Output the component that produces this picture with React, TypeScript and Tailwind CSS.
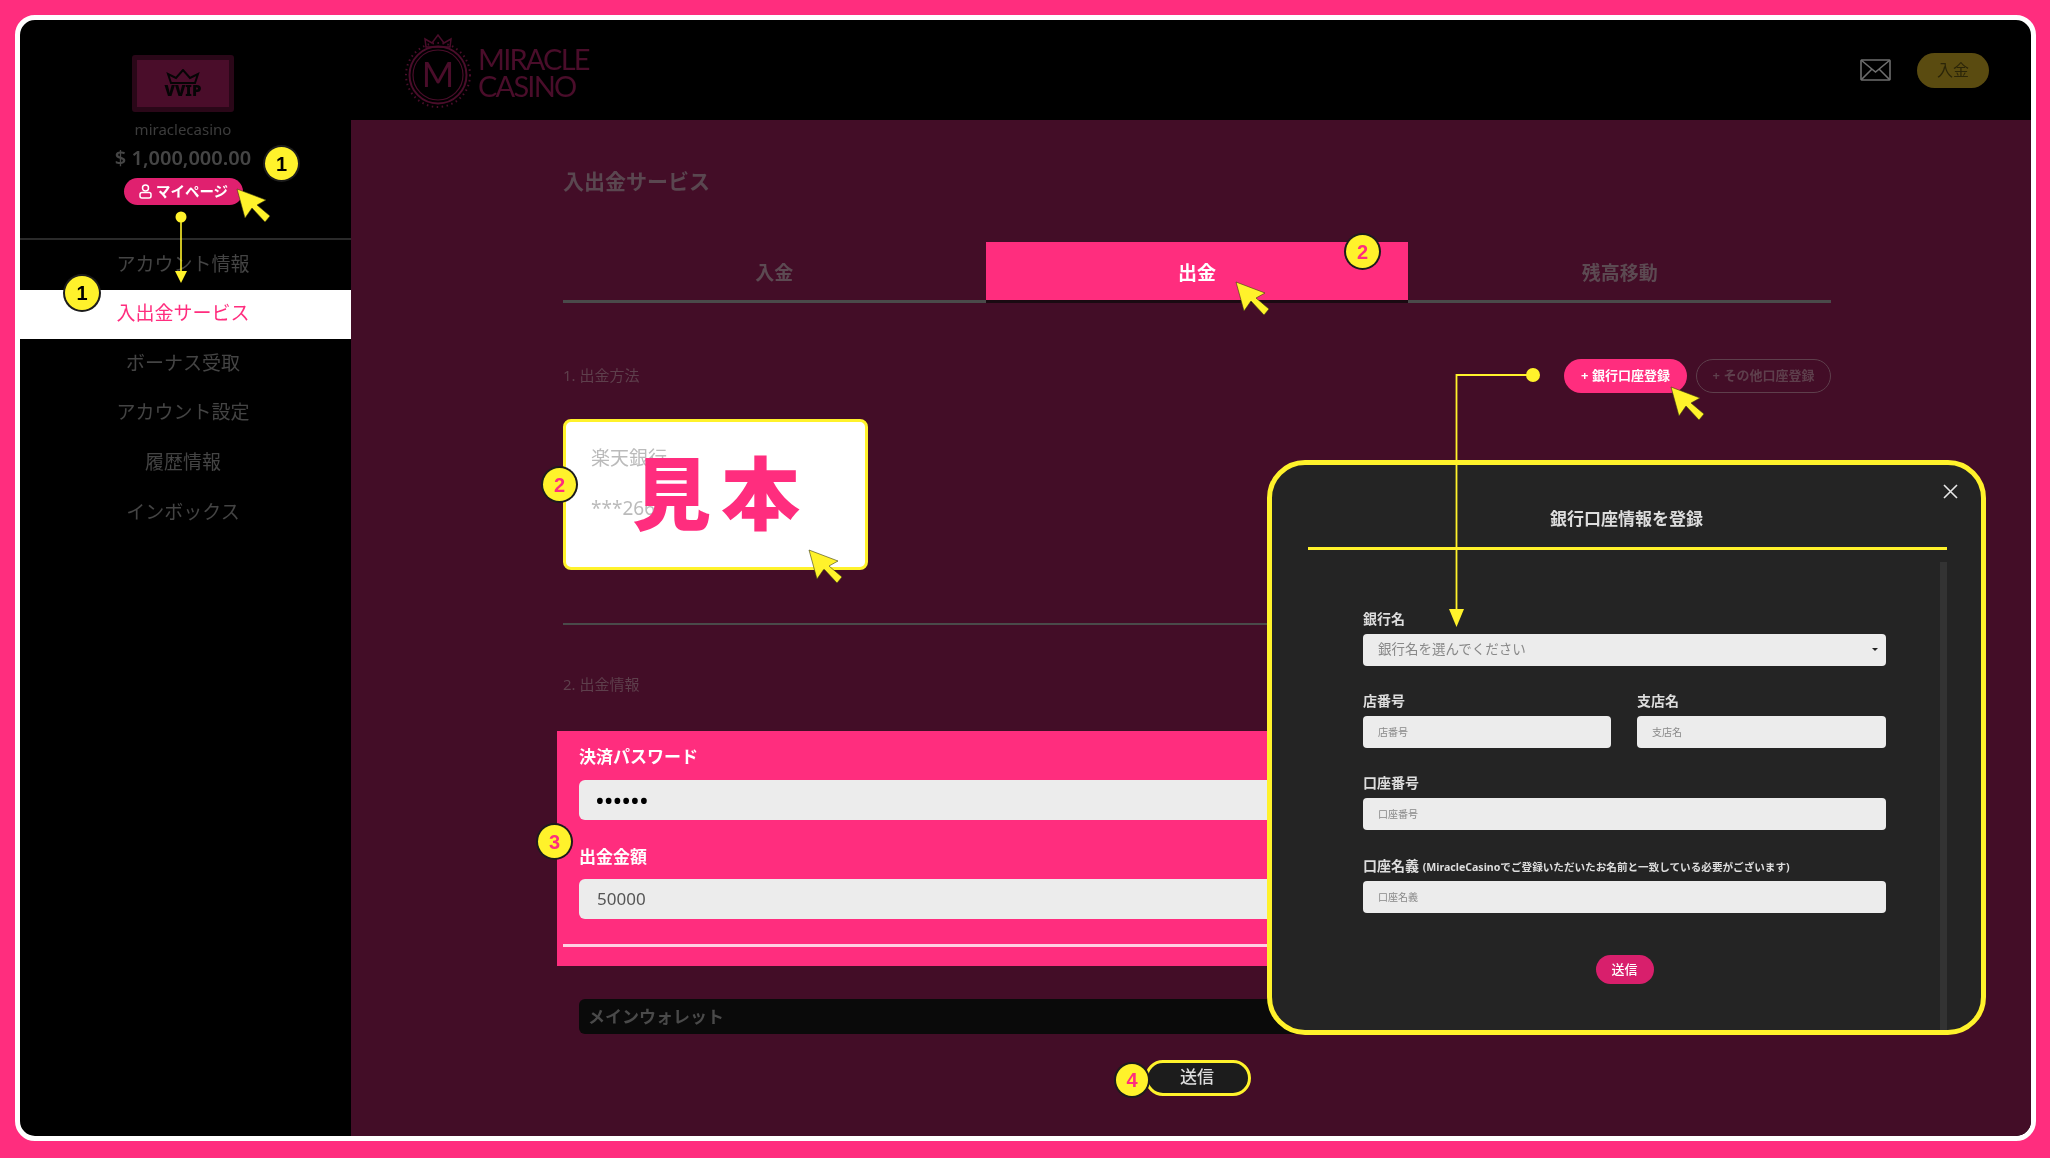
import React from 'react';

const menu = ['アカウント情報', '入出金サービス', 'ボーナス受取', 'アカウント設定', '履歴情報', 'インボックス'];
const cursorPath = 'M0 0 L8 29 L15 19 L28 33 L33 27 L20 16 L29 11 Z';

function Badge({ n, className }: { n: number; className: string }) {
  return (
    <div
      className={`absolute flex items-center justify-center rounded-full bg-[#fff22b] font-['Liberation_Sans'] font-bold shadow-[0_0_0_2px_#1c1c1c] ${n === 1 ? 'text-black' : 'text-[#ff2d7e]'} ${className}`}
    >
      {n}
    </div>
  );
}

function Cursor({ x, y }: { x: number; y: number }) {
  return <path d={cursorPath} transform={`translate(${x} ${y})`} fill="#fff22b" stroke="#3a3a10" strokeWidth="0.6" />;
}

function Logo() {
  return (
    <div className="ml-[54px] flex items-center">
      <svg width="68" height="76" viewBox="0 0 68 76" fill="none" stroke="#4a0d2a">
        <circle cx="33" cy="43" r="32" strokeWidth="2" strokeDasharray="1.5 3.5" />
        <circle cx="33" cy="43" r="28.5" strokeWidth="2" />
        <circle cx="33" cy="43" r="25" strokeWidth="1.2" />
        <path d="M21 15 L20 7 L27 11 L33 3 L39 11 L46 7 L45 15 Z" strokeWidth="1.5" />
        <text x="33" y="55" textAnchor="middle" fill="#4a0d2a" stroke="none" fontFamily="Lato" fontSize="35">M</text>
      </svg>
      <div className="ml-[5px] mt-[3px] font-['Lato'] text-[29px] leading-[27px] tracking-[-1.8px] text-[#4a0d2a]">
        <div>MIRACLE</div>
        <div>CASINO</div>
      </div>
    </div>
  );
}

function Field({ label, placeholder, className }: { label: React.ReactNode; placeholder: string; className?: string }) {
  return (
    <div className={className}>
      <div className="h-[19px] text-[14px] font-bold leading-[17px] text-[#dddddd]">{label}</div>
      <div className="mt-[5px] flex h-[32px] items-center rounded-[4px] bg-[#ececec] pl-[15px] text-[10px] text-[#888888]">
        {placeholder}
      </div>
    </div>
  );
}

function BankModal() {
  return (
    <div className="absolute left-[1267px] top-[460px] h-[575px] w-[719px] overflow-hidden rounded-[38px] border-[5px] border-[#fff22b] bg-[#242424]">
      <svg className="absolute left-[671px] top-[19px]" width="15" height="15" viewBox="0 0 15 15" stroke="#e8e8e8" strokeWidth="1.6">
        <path d="M1 1 L14 14 M14 1 L1 14" />
      </svg>
      <div className="ml-[36px] mt-[42px] h-[24px] w-[639px] pr-[2px] text-center text-[17px] font-bold leading-[24px] text-[#dddddd]">銀行口座情報を登録</div>
      <div className="ml-[36px] mt-[16px] h-[3px] w-[639px] bg-[#fff22b]" />
      <div className="flex">
        <div className="ml-[91px] mt-[60px] w-[523px]">
          <div>
            <div className="h-[19px] text-[14px] font-bold leading-[17px] text-[#dddddd]">銀行名</div>
            <div className="mt-[5px] flex h-[32px] items-center justify-between rounded-[4px] bg-[#ececec] pb-[1px] pl-[15px] pr-[8px] text-[13.5px] text-[#888888]">
              銀行名を選んでください
              <span className="h-0 w-0 border-x-[3px] border-t-[3px] border-x-transparent border-t-[#222222]" />
            </div>
          </div>
          <div className="mt-[26px] flex gap-[26px]">
            <Field label="店番号" placeholder="店番号" className="w-[248px]" />
            <Field label="支店名" placeholder="支店名" className="w-[249px]" />
          </div>
          <Field label="口座番号" placeholder="口座番号" className="mt-[26px]" />
          <Field
            label={
              <>
                口座名義 <span className="text-[10.6px]">(MiracleCasinoでご登録いただいたお名前と一致している必要がございます)</span>
              </>
            }
            placeholder="口座名義"
            className="mt-[27px]"
          />
          <div className="mx-auto mt-[42px] flex h-[29px] w-[58px] items-center justify-center rounded-full bg-[#d81f6c] text-[13px] font-medium text-white">
            送信
          </div>
        </div>
        <div className="ml-[54px] mt-[12px] h-[480px] w-[7px] bg-[#333333]" />
      </div>
    </div>
  );
}

export default function App() {
  return (
    <div className="relative h-[1158px] w-[2050px] overflow-hidden bg-[#ff2d7e] pl-[15px] pt-[15px] font-['Noto_Sans','Noto_Sans_CJK_JP',sans-serif] blur-[0.7px]">
      <div className="flex h-[1126px] w-[2021px] overflow-hidden rounded-[20px] border-[5px] border-white bg-black">
        {/* sidebar */}
        <aside className="w-[331px] shrink-0 pt-[35px] text-center">
          <div className="ml-[112px] flex h-[57px] w-[102px] items-center justify-center rounded-[3px] border-[5px] border-[#2a0718] bg-[#4a0d2a]">
            <div className="flex flex-col items-center">
              <svg width="34" height="16" viewBox="0 0 34 16" fill="none" stroke="#050505" strokeWidth="2">
                <path d="M5 14 L2 5 L10 9 L17 1 L24 9 L32 5 L29 14 Z" />
              </svg>
              <div className="-mt-[2px] text-[15px] font-black leading-[15px] text-[#050505]">VVIP</div>
            </div>
          </div>
          <div className="mr-[5px] mt-[8px] h-[20px] text-[15px] leading-[18px] text-[#3c3c3c]">miraclecasino</div>
          <div className="mr-[5px] mt-[4px] h-[28px] text-[20px] font-semibold leading-[28px] text-[#454545]">$ 1,000,000.00</div>
          <div className="ml-[104px] mt-[6px] flex h-[27px] w-[119px] items-center justify-center gap-[4px] rounded-full bg-[#e0206f] text-[14.5px] font-bold text-white">
            <svg width="13" height="15" viewBox="0 0 13 15" fill="none" stroke="white" strokeWidth="1.5">
              <circle cx="6.5" cy="4" r="3" />
              <rect x="1" y="8.5" width="11" height="5.5" rx="2" />
            </svg>
            マイページ
          </div>
          <div className="mt-[33px] h-[2px] bg-[#2a2a2a]" />
          <nav>
            {menu.map((item, i) => (
              <div
                key={item}
                className={`flex h-[49.6px] items-center justify-center pb-[2px] pr-[5px] text-[19px] ${i === 1 ? 'bg-white text-[#ff2d7e]' : 'text-[#444444]'}`}
              >
                {item}
              </div>
            ))}
          </nav>
        </aside>

        <div className="flex min-w-0 flex-1 flex-col">
          {/* header */}
          <header className="flex h-[100px] shrink-0 items-center justify-between">
            <Logo />
            <div className="mr-[42px] flex items-center gap-[26px]">
              <svg width="31" height="22" viewBox="0 0 31 22" fill="none" stroke="#6e6e6e" strokeWidth="1.6">
                <rect x="1" y="1" width="29" height="20" rx="1" />
                <path d="M1 1 L15.5 13 L30 1 M1 21 L12 10 M30 21 L19 10" />
              </svg>
              <div className="flex h-[35px] w-[72px] items-center justify-center rounded-full bg-[#5a4b10] text-[16px] text-[#2b2508]">入金</div>
            </div>
          </header>

          {/* main */}
          <main className="flex-1 bg-[#430d27] pl-[212px] pr-[200px] pt-[47px]">
            <h1 className="h-[30px] text-[21px] font-bold leading-[28px] text-[#5a4750]">入出金サービス</h1>

            <div className="mt-[45px] flex">
              <div className="flex h-[61px] flex-1 items-center justify-center border-b-[3px] border-[#4a4a4a] pt-[5px] text-[19px] font-bold text-[#5c4a52]">入金</div>
              <div className="flex h-[61px] flex-1 items-center justify-center border-b-[3px] border-[#1a0a12] bg-[#ff2d7e] pt-[5px] text-[19px] font-bold text-white">出金</div>
              <div className="flex h-[61px] flex-1 items-center justify-center border-b-[3px] border-[#4a4a4a] pt-[5px] text-[19px] font-bold text-[#5c4a52]">残高移動</div>
            </div>

            <div className="mt-[56px] flex h-[34px] items-center justify-between">
              <div className="pb-[2px] text-[15px] text-[#5e3f4c]">1. 出金方法</div>
              <div className="flex gap-[9px]">
                <div className="flex h-[34px] w-[123px] items-center justify-center rounded-full bg-[#ff2d7e] text-[13px] font-bold text-white">+ 銀行口座登録</div>
                <div className="flex h-[34px] w-[135px] items-center justify-center rounded-full border-[1.5px] border-[#5e3f4c] text-[13px] font-bold text-[#5e3f4c]">+ その他口座登録</div>
              </div>
            </div>

            <div className="relative mt-[26px] h-[151px] w-[305px] rounded-[8px] border-[3px] border-[#fff22b] bg-white pl-[25px] pt-[22px] text-[19px] text-[#bbbbbb]">
              <div className="leading-[28px]">楽天銀行</div>
              <div className="mt-[22px] leading-[28px]">***2669</div>
              <div className="absolute left-[66px] top-[26px] text-[79px] font-black leading-[92px] tracking-[10px] text-[#ff2d7e]">見本</div>
            </div>

            <div className="mt-[53px] h-[2px] bg-[#4a4a4a]" />
            <div className="mt-[50px] h-[20px] text-[15px] leading-[18px] text-[#5e3f4c]">2. 出金情報</div>

            <section className="-mx-[6px] mt-[36px] h-[235px] bg-[#ff2d7e] px-[22px] pt-[14px]">
              <div className="h-[24px] text-[17px] font-bold leading-[24px] text-white">決済パスワード</div>
              <div className="mt-[11px] flex h-[40px] items-center rounded-[6px] bg-[#ececec] pl-[16px] text-[26px] leading-none tracking-[-1px] text-black">••••••</div>
              <div className="mt-[25px] h-[24px] text-[17px] font-bold leading-[24px] text-white">出金金額</div>
              <div className="mt-[10px] flex h-[40px] items-center rounded-[6px] bg-[#ececec] pl-[18px] text-[17px] text-[#555555]">50000</div>
              <div className="-ml-[16px] -mr-[16px] mt-[25px] h-[3px] bg-[#ffd0e2]" />
            </section>

            <div className="mx-[16px] mt-[33px] flex h-[35px] items-center rounded-[6px] bg-[#0a0a0a] pl-[9px] text-[17px] font-bold text-[#4a4a4a]">メインウォレット</div>

            <div className="ml-[582px] mt-[26px] flex h-[36px] w-[106px] items-center justify-center rounded-full border-[3px] border-[#fff22b] bg-[#1c1c1c] pb-[2px] pr-[2px] text-[17px] font-medium text-[#dddddd]">送信</div>
          </main>
        </div>
      </div>

      <BankModal />

      {/* annotations */}
      <svg className="pointer-events-none absolute left-0 top-0" width="2050" height="1158" viewBox="0 0 2050 1158" fill="none">
        <circle cx="181" cy="217" r="5.5" fill="#fff22b" />
        <path d="M181 217 V275" stroke="#fff22b" strokeWidth="1.6" />
        <path d="M175 271 L187 271 L181 283 Z" fill="#fff22b" />
        <circle cx="1533" cy="375" r="7" fill="#fff22b" />
        <path d="M1533 375 H1456.5 V615" stroke="#fff22b" strokeWidth="1.8" />
        <path d="M1449 609 L1464 609 L1456.5 627 Z" fill="#fff22b" />
        <Cursor x={237} y={189} />
        <Cursor x={1236} y={282} />
        <Cursor x={1671} y={387} />
        <Cursor x={809} y={550} />
      </svg>
      <Badge n={1} className="left-[265px] top-[147px] h-[33px] w-[33px] text-[20px]" />
      <Badge n={1} className="left-[65px] top-[276px] h-[34px] w-[34px] text-[20px]" />
      <Badge n={2} className="left-[1346px] top-[235px] h-[33px] w-[33px] text-[20px]" />
      <Badge n={2} className="left-[543px] top-[468px] h-[33px] w-[33px] text-[20px]" />
      <Badge n={3} className="left-[538px] top-[825px] h-[33px] w-[33px] text-[20px]" />
      <Badge n={4} className="left-[1116px] top-[1064px] h-[32px] w-[32px] text-[20px]" />
    </div>
  );
}
